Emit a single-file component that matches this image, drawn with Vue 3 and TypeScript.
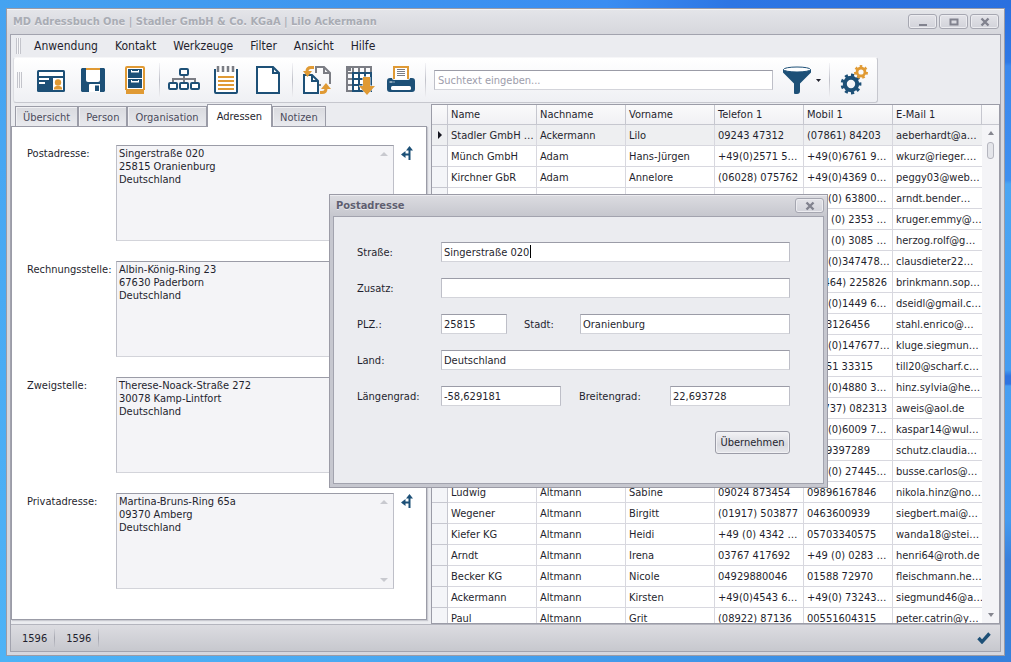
<script setup lang="ts">
import { ref } from 'vue'

interface Contact {
  name: string
  last: string
  first: string
  phone: string
  mobile: string
  mail: string
}

interface AddressBlock {
  id: string
  label: string
  text: string
  route: boolean
}

const menu: string[] = ['Anwendung', 'Kontakt', 'Werkzeuge', 'Filter', 'Ansicht', 'Hilfe']
const tabs: string[] = ['Übersicht', 'Person', 'Organisation', 'Adressen', 'Notizen']
const activeTab = ref('Adressen')
const search = ref('')

const addresses: AddressBlock[] = [
  { id: 'post', label: 'Postadresse:', text: 'Singerstraße 020\n25815 Oranienburg\nDeutschland', route: true },
  { id: 'bill', label: 'Rechnungsstelle:', text: 'Albin-König-Ring 23\n67630 Paderborn\nDeutschland', route: true },
  { id: 'branch', label: 'Zweigstelle:', text: 'Therese-Noack-Straße 272\n30078 Kamp-Lintfort\nDeutschland', route: true },
  { id: 'home', label: 'Privatadresse:', text: 'Martina-Bruns-Ring 65a\n09370 Amberg\nDeutschland', route: true },
]

const columns: string[] = ['Name', 'Nachname', 'Vorname', 'Telefon 1', 'Mobil 1', 'E-Mail 1']

const row = (name: string, last: string, first: string, phone: string, mobile: string, mail: string): Contact => ({
  name, last, first, phone, mobile, mail,
})

const contacts: Contact[] = [
  row('Stadler GmbH …', 'Ackermann', 'Lilo', '09243 47312', '(07861) 84203', 'aeberhardt@a…'),
  row('Münch GmbH', 'Adam', 'Hans-Jürgen', '+49(0)2571 5…', '+49(0)6761 9…', 'wkurz@rieger.…'),
  row('Kirchner GbR', 'Adam', 'Annelore', '(06028) 075762', '+49(0)4369 0…', 'peggy03@web…'),
  row('', '', '', '', '+49(0) 63800…', 'arndt.bender…'),
  row('', '', '', '', '+49 (0) 2353 …', 'kruger.emmy@…'),
  row('', '', '', '', '+49 (0) 3085 …', 'herzog.rolf@g…'),
  row('', '', '', '', '+49(0)347478…', 'clausdieter22…'),
  row('', '', '', '', '(07464) 225826', 'brinkmann.sop…'),
  row('', '', '', '', '+49(0)1449 6…', 'dseidl@gmail.c…'),
  row('', '', '', '', '0463126456', 'stahl.enrico@…'),
  row('', '', '', '', '+49(0)147677…', 'kluge.siegmun…'),
  row('', '', '', '', '03651 33315', 'till20@scharf.c…'),
  row('', '', '', '', '+49(0)4880 3…', 'hinz.sylvia@he…'),
  row('', '', '', '', '(07737) 082313', 'aweis@aol.de'),
  row('', '', '', '', '+49(0)6009 7…', 'kaspar14@wul…'),
  row('', '', '', '', '0469397289', 'schutz.claudia…'),
  row('', '', '', '', '+49(0) 27445…', 'busse.carlos@…'),
  row('Ludwig', 'Altmann', 'Sabine', '09024 873454', '09896167846', 'nikola.hinz@no…'),
  row('Wegener', 'Altmann', 'Birgitt', '(01917) 503877', '0463600939', 'siegbert.mai@…'),
  row('Kiefer KG', 'Altmann', 'Heidi', '+49 (0) 4342 …', '05703340575', 'wanda18@stei…'),
  row('Arndt', 'Altmann', 'Irena', '03767 417692', '+49 (0) 0283 …', 'henri64@roth.de'),
  row('Becker KG', 'Altmann', 'Nicole', '04929880046', '01588 72970', 'fleischmann.he…'),
  row('Ackermann', 'Altmann', 'Kirsten', '+49(0)4543 6…', '+49(0) 73243…', 'siegmund46@a…'),
  row('Paul', 'Altmann', 'Grit', '(08922) 87136', '00551604315', 'peter.catrin@y…'),
]

const form = ref({
  street: 'Singerstraße 020',
  extra: '',
  zip: '25815',
  city: 'Oranienburg',
  country: 'Deutschland',
  lng: '-58,629181',
  lat: '22,693728',
})
</script>

<template>
  <div class="desktop">
    <main class="window">
      <header class="titlebar">
        <h1>MD Adressbuch One | Stadler GmbH &amp; Co. KGaA | Lilo Ackermann</h1>
        <button class="cap" type="button" aria-label="Minimieren">
          <svg width="12" height="10" viewBox="0 0 12 10"><path d="M2 8h8" stroke="#81828e" stroke-width="2" /></svg>
        </button>
        <button class="cap" type="button" aria-label="Maximieren">
          <svg width="12" height="10" viewBox="0 0 12 10"><rect x="2.5" y="2.5" width="7" height="5" fill="none" stroke="#81828e" stroke-width="2" /></svg>
        </button>
        <button class="cap" type="button" aria-label="Schließen">
          <svg width="12" height="10" viewBox="0 0 12 10"><path d="M2.5 1.5l7 7M9.5 1.5l-7 7" stroke="#81828e" stroke-width="2.4" /></svg>
        </button>
      </header>

      <div class="client">
        <nav class="menu">
          <i class="grip"></i>
          <button v-for="m in menu" :key="m" type="button">{{ m }}</button>
        </nav>

        <div class="toolbar">
          <i class="grip tall"></i>
          <div class="group">
            <button class="tool" type="button" aria-label="Visitenkarte">
              <svg viewBox="0 0 32 32">
                <rect x="2" y="6" width="28" height="22" rx="1.5" fill="#1d5077" />
                <path d="M4 8h24v4H4zM4 14h10v2H4zM4 18h6v2H4zM18 14h10v12H18z" fill="#fff" />
                <circle cx="23" cy="18.5" r="3.2" fill="#e09a34" />
                <path d="M19 25.5v-1.5q0-1.500 2.500-2h3q2.500.5 2.500 2v1.500z" fill="#e09a34" />
              </svg>
            </button>
            <button class="tool" type="button" aria-label="Speichern">
              <svg viewBox="0 0 32 32">
                <path d="M5 4h22l1 1v22l-1 1H5l-1-1V5z" fill="#1d5077" />
                <path d="M9 4h14v12q0 2-2 2H11q-2 0-2-2z" fill="#fff" />
                <path d="M9 4h14v2H9z" fill="#e09a34" />
                <path d="M12 28v-7q0-1 1-1h10v8z" fill="#fff" />
                <path d="M18 21.5h4V27h-4z" fill="#1d5077" />
              </svg>
            </button>
            <button class="tool" type="button" aria-label="Archiv">
              <svg viewBox="0 0 32 32">
                <path d="M8 2h16q2 0 2 2v22h-1v4H7v-4H6V4q0-2 2-2z" fill="#e09a34" />
                <rect x="8" y="4" width="16" height="21" fill="#fff" />
                <path d="M9 5h14v9H9zM9 15h14v9H9z" fill="#1d5077" />
                <path d="M12 6h1v1h6V6h1v2.500h-8zM12 16h1v1h6v-1h1v2.500h-8z" fill="#fff" />
              </svg>
            </button>
          </div>
          <i class="sep"></i>
          <div class="group">
            <button class="tool" type="button" aria-label="Struktur">
              <svg viewBox="0 0 32 32" fill="none" stroke="#1d5077" stroke-width="2">
                <path d="M16 12v7M5 19v-4h22v4" stroke="#7b7d84" />
                <g fill="#fff">
                  <rect x="12" y="5" width="8" height="6" rx="1" />
                  <rect x="1" y="19" width="8" height="6" rx="1" />
                  <rect x="12" y="19" width="8" height="6" rx="1" />
                  <rect x="23" y="19" width="8" height="6" rx="1" />
                </g>
              </svg>
            </button>
            <button class="tool" type="button" aria-label="Notizblock">
              <svg viewBox="0 0 32 32">
                <path d="M5 5v23q0 1 1 1h20q1 0 1-1V5" fill="#fff" stroke="#1d5077" stroke-width="2" />
                <path d="M8 2v6M13 2v6M18 2v6M23 2v6" stroke="#7b7d84" stroke-width="2.5" />
                <path d="M8 13h16M8 17h16M8 21h16M8 25h16" stroke="#e09a34" stroke-width="2" />
              </svg>
            </button>
            <button class="tool" type="button" aria-label="Neu">
              <svg viewBox="0 0 32 32">
                <path d="M5 3h16l6 6v20H5z" fill="#fff" stroke="#1d5077" stroke-width="2" />
                <path d="M21 3v6h6" fill="none" stroke="#1d5077" stroke-width="2" />
              </svg>
            </button>
          </div>
          <i class="sep"></i>
          <div class="group">
            <button class="tool" type="button" aria-label="Kopieren">
              <svg viewBox="0 0 32 32" fill="none" stroke-width="2">
                <path d="M15 9V3h8l6 6v11M23 3v6h6M18 21h2" stroke="#7b7d84" />
                <path d="M3 11h8l6 6v12H3z" fill="#fff" stroke="#1d5077" />
                <path d="M11 11v6h6" stroke="#1d5077" />
                <path d="M13 3.500H10q-4 0-4 4" stroke="#e09a34" stroke-width="3" />
                <path d="M2 7h9l-4.500 6z" fill="#e09a34" />
                <path d="M19 28.500h2q4 0 4-4" stroke="#e09a34" stroke-width="3" />
                <path d="M20 25h10l-5-6z" fill="#e09a34" />
              </svg>
            </button>
            <button class="tool" type="button" aria-label="Tabelle exportieren">
              <svg viewBox="0 0 32 32" fill="none" stroke-width="2">
                <path d="M4 4v23h5M3 3h25v5M3 9h6M3 15h6M3 21h6M10 3v5M16 3v5M22 3v5" stroke="#7b7d84" />
                <path d="M3 2h5v5H3z" fill="#7b7d84" />
                <path d="M10 9h18v18H10zM10 15h18M10 21h18M16 9v18M22 9v18" fill="#fff" stroke="#1d5077" />
                <path d="M20 13h7v9h5l-8 9-8-9h4z" fill="#e09a34" stroke="#f4f4f7" stroke-width="1" paint-order="stroke" />
              </svg>
            </button>
            <button class="tool" type="button" aria-label="Drucken">
              <svg viewBox="0 0 32 32">
                <path d="M9 15V3h14v12" fill="#fff" stroke="#e09a34" stroke-width="2" />
                <path d="M12 5.500h8M12 7.500h8M12 9.500h8M12 11.500h8" stroke="#7b7d84" />
                <path d="M5 14h2q0 2 2 2h14q2 0 2-2h2q3 0 3 3v8q0 3-3 3H5q-3 0-3-3v-8q0-3 3-3z" fill="#1d5077" />
                <rect x="6" y="22" width="20" height="4" rx="1.5" fill="#fff" />
                <path d="M4.500 18h3M8.500 18h1" stroke="#fff" />
              </svg>
            </button>
          </div>
          <i class="sep"></i>
          <input v-model="search" class="search" type="text" placeholder="Suchtext eingeben..." aria-label="Suchtext" />
          <button class="tool filter" type="button" aria-label="Filter">
            <svg viewBox="0 0 32 32">
              <path d="M2 5.500v3l11 11V29q0 1 1 1h2q3 0 3-3v-7.500l11-11v-3z" fill="#1d5077" />
              <ellipse cx="16" cy="5.500" rx="13.500" ry="2.500" fill="#fff" stroke="#1d5077" />
            </svg>
          </button>
          <button class="drop" type="button" aria-label="Filterauswahl">
            <svg width="5" height="3" viewBox="0 0 5 3"><path d="M0 0h5L2.500 3z" fill="#23232f" /></svg>
          </button>
          <i class="sep"></i>
          <button class="tool" type="button" aria-label="Einstellungen">
            <svg viewBox="0 0 32 32" fill="none">
              <g stroke="#1d5077">
                <circle cx="13" cy="20" r="6.2" stroke-width="4" />
                <circle cx="13" cy="20" r="8.8" stroke-width="3.2" pathLength="18" stroke-dasharray="1 1" stroke-dashoffset="0.5" />
              </g>
              <g stroke="#e09a34">
                <circle cx="23" cy="8" r="4" stroke-width="2.8" />
                <circle cx="23" cy="8" r="5.8" stroke-width="2.4" pathLength="14" stroke-dasharray="1 1" />
              </g>
            </svg>
          </button>
        </div>

        <div class="work">
          <section class="detail">
            <div class="tabs" role="tablist">
              <button
                v-for="t in tabs"
                :key="t"
                type="button"
                role="tab"
                :aria-selected="t === activeTab"
                :class="{ active: t === activeTab }"
                @click="activeTab = t"
              >{{ t }}</button>
            </div>
            <div class="page">
              <div v-for="a in addresses" :key="a.id" class="address">
                <label :for="a.id">{{ a.label }}</label>
                <div class="memo">
                  <textarea :id="a.id" readonly :value="a.text"></textarea>
                  <i class="tri up"></i>
                  <i class="tri down"></i>
                </div>
                <button v-if="a.route" class="route" type="button" aria-label="Route">
                  <svg width="13" height="14" viewBox="0 0 13 14">
                    <path d="M8.500 14V3M9 8.500H3" fill="none" stroke="#1d5077" stroke-width="2" />
                    <path d="M8.500 0L12 4.500H5zM0 8.500L4.500 5v7z" fill="#1d5077" />
                  </svg>
                </button>
              </div>
            </div>
          </section>

          <section class="grid">
            <div class="rows">
              <table>
                <colgroup>
                  <col class="mark" />
                  <col v-for="c in columns" :key="c" />
                </colgroup>
                <thead>
                  <tr>
                    <th></th>
                    <th v-for="c in columns" :key="c" scope="col">{{ c }}</th>
                  </tr>
                </thead>
                <tbody>
                  <tr v-for="(c, i) in contacts" :key="i" :class="{ current: i === 0 }">
                    <td class="mark"><i v-if="i === 0" class="pointer"></i></td>
                    <td>{{ c.name }}</td>
                    <td>{{ c.last }}</td>
                    <td>{{ c.first }}</td>
                    <td>{{ c.phone }}</td>
                    <td>{{ c.mobile }}</td>
                    <td>{{ c.mail }}</td>
                  </tr>
                </tbody>
              </table>
            </div>
            <div class="scroll">
              <div class="corner"></div>
              <i class="arrow up"></i>
              <i class="thumb"></i>
              <i class="arrow down"></i>
            </div>
          </section>
        </div>

        <footer class="status">
          <span>1596</span><i></i><span>1596</span><i></i>
          <svg width="14" height="12" viewBox="0 0 14 12"><path d="M1.500 6l3.500 3.800L12.500 1.500" fill="none" stroke="#1d5077" stroke-width="3.4" /></svg>
        </footer>
      </div>
    </main>

    <div class="dialog" role="dialog" aria-labelledby="dlg-title">
      <header>
        <h2 id="dlg-title">Postadresse</h2>
        <button class="cap" type="button" aria-label="Dialog schließen">
          <svg width="12" height="10" viewBox="0 0 12 10"><path d="M2.500 1.500l7 7M9.500 1.500l-7 7" stroke="#81828e" stroke-width="2.4" /></svg>
        </button>
      </header>
      <form @submit.prevent>
        <div class="line">
          <label for="street">Straße:</label>
          <div class="focused"><input id="street" v-model="form.street" type="text" /><i class="caret"></i></div>
        </div>
        <div class="line">
          <label for="extra">Zusatz:</label>
          <input id="extra" v-model="form.extra" type="text" />
        </div>
        <div class="line zip">
          <label for="zip">PLZ.:</label>
          <input id="zip" v-model="form.zip" type="text" />
          <label for="city">Stadt:</label>
          <input id="city" v-model="form.city" type="text" />
        </div>
        <div class="line">
          <label for="country">Land:</label>
          <input id="country" v-model="form.country" type="text" />
        </div>
        <div class="line geo">
          <label for="lng">Längengrad:</label>
          <input id="lng" v-model="form.lng" type="text" />
          <label for="lat">Breitengrad:</label>
          <input id="lat" v-model="form.lat" type="text" />
        </div>
        <button class="apply" type="submit">Übernehmen</button>
      </form>
    </div>
  </div>
</template>

<style>
body {
  margin: 0;
}
</style>

<style scoped>
.desktop,
.desktop * {
  box-sizing: border-box;
}

.desktop {
  position: relative;
  display: flex;
  height: 100vh;
  padding: 8px 6px 6px;
  background:
    linear-gradient(to right, #45a3f1 0, #3e95ef 35%, #3a8df2 60%, #2d76e4 72%, #2a70df 100%) top / 100% 8px no-repeat,
    linear-gradient(to bottom, #2b70e0 0, #2f79e6 62px, #3c89ee 66px, #3f8fef 180px, #4ca6f3 184px, #469df1 370px, #2f74e0 376px, #2f74e0 384px, #489ff2 386px, #459bf0 520px, #3a80dc 560px, #3681dc 100%) right / 8px 100% no-repeat,
    linear-gradient(to bottom, #45a3f1, #4eb3f6) left / 8px 100% no-repeat,
    linear-gradient(to right, #4eb3f6 0, #4aa9f2 35%, #3f95e8 70%, #3580dc 100%);
  color: #1f1f2e;
  font: 11px/13px "DejaVu Sans Condensed", "DejaVu Sans", sans-serif;
  overflow: hidden;
}

button,
input,
textarea {
  margin: 0;
  color: inherit;
  font: inherit;
}

button {
  display: flex;
  align-items: center;
  justify-content: center;
  padding: 0;
  border: 0;
  background: none;
}

svg {
  display: block;
}

.window {
  display: flex;
  flex: 1;
  flex-direction: column;
  min-width: 0;
  padding: 0 3px 3px;
  border: 1px solid #9a9ba6;
  background: #d6d7de;
}

.titlebar {
  display: flex;
  align-items: center;
  gap: 2px;
  height: 25px;
  margin: 0 -3px;
  padding: 0 5px 0 6px;
  background: linear-gradient(#e4e5e9, #d6d7dd);
  box-shadow: inset 0 1px #f4f4f6;
}

h1,
h2 {
  flex: 1;
  margin: 0;
  font-size: 11px;
  line-height: 14px;
}

h1 {
  color: #a9acb4;
  text-shadow: 0 1px #f0f0f3;
  white-space: nowrap;
}

.cap {
  width: 29px;
  height: 15px;
  border: 1px solid #a6a7b1;
  border-radius: 3px;
  background: linear-gradient(#e3e3e8, #d2d3da);
  box-shadow: inset 0 0 0 1px #ececf0;
}

.client {
  display: flex;
  flex: 1;
  flex-direction: column;
  min-height: 0;
  border: 1px solid #a2a3ae;
  background: #ebecf0;
}

.menu {
  display: flex;
  align-items: center;
  height: 22px;
  padding-left: 5px;
  font-size: 12px;
  line-height: 16px;
}

.menu button {
  margin-left: 17px;
}

.menu .grip + button {
  margin-left: 13px;
}

.grip {
  width: 5px;
  height: 16px;
  background: repeating-linear-gradient(to right, #c3c4cb 0 1px, #f7f7f9 1px 2px);
}

.grip.tall {
  margin: 0 13px 0 3px;
}

.toolbar {
  display: flex;
  flex: none;
  align-items: center;
  align-self: flex-start;
  height: 46px;
  margin-left: 2px;
  padding-right: 7px;
  border: 1px solid #c6c7ce;
  border-top-color: #f6f6f8;
  border-left-color: #dcdde2;
  border-radius: 3px;
  background: linear-gradient(#fff, #eff0f4);
}

.group {
  display: flex;
  gap: 10px;
}

.sep {
  width: 1px;
  height: 34px;
  margin: 0 8px;
  background: linear-gradient(#f4f4f7, #c0c1c9 50%, #f0f0f3);
}

.tool,
.tool svg {
  width: 32px;
  height: 32px;
}

.search {
  width: 339px;
  height: 20px;
  padding: 0 3px;
}

.search,
.line input {
  border: 1px solid;
  border-color: #9b9ca7 #bebfc8 #d3d4da #bebfc8;
  border-radius: 0;
  outline: none;
  background: #fff;
}

.search::placeholder {
  color: #9d9dab;
  opacity: 1;
}

.filter {
  margin-left: 8px;
}

.drop {
  width: 5px;
  height: 32px;
  margin-left: 3px;
}

.work {
  display: flex;
  flex: 1;
  gap: 4px;
  min-height: 0;
  padding-top: 1px;
}

.detail {
  display: flex;
  flex: none;
  flex-direction: column;
  width: 416px;
  padding-bottom: 4px;
}

.tabs {
  display: flex;
  align-items: flex-end;
  height: 22px;
  padding-left: 4px;
}

.tabs button {
  height: 20px;
  padding: 2px 7px 0;
  border: 1px solid #9b9ca7;
  border-bottom: 0;
  background: linear-gradient(#d9dadf, #e9eaee);
  box-shadow: inset 1px 1px #f1f1f4;
  color: #4b4b5c;
}

.tabs .active {
  z-index: 1;
  height: 23px;
  margin-bottom: -1px;
  padding: 0 9px;
  background: #fff;
  box-shadow: none;
  color: #1f1f2e;
}

.page {
  display: flex;
  flex: 1;
  flex-direction: column;
  gap: 20px;
  padding: 18px 12px 0 15px;
  border: 1px solid #9b9ca7;
  background: #fff;
  box-shadow: 1px 1px 1px #c9cad1;
  overflow: hidden;
}

.address {
  display: flex;
  align-items: flex-start;
}

.address label {
  width: 89px;
  padding-top: 2px;
  white-space: nowrap;
}

.memo {
  position: relative;
  flex: 1;
  height: 96px;
}

.memo textarea {
  display: block;
  width: 100%;
  height: 100%;
  padding: 1px 2px;
  border: 1px solid;
  border-color: #9b9ca7 #bebfc8 #d3d4da #bebfc8;
  outline: none;
  background: #f4f4f7;
  resize: none;
  overflow: hidden;
}

.tri {
  position: absolute;
  right: 6px;
  border: solid transparent;
  border-width: 0 4px;
}

.tri.up {
  top: 7px;
  border-bottom: 4px solid #c8c9cf;
}

.tri.down {
  bottom: 7px;
  border-top: 4px solid #c8c9cf;
}

.route {
  margin: 1px 0 0 7px;
}

.grid {
  display: flex;
  flex: 1;
  min-width: 0;
  border: 1px solid #9b9ca7;
  background: #fff;
  overflow: hidden;
}

.rows {
  flex: 1;
  min-width: 0;
  overflow: hidden;
}

table {
  width: 100%;
  border-spacing: 0;
  table-layout: fixed;
}

col.mark {
  width: 16px;
}

th,
td {
  height: 21px;
  padding: 0 0 0 3px;
  border-right: 1px solid #d8d8df;
  border-bottom: 1px solid #d8d8df;
  font-weight: normal;
  text-align: left;
  white-space: nowrap;
  overflow: hidden;
}

th {
  height: 20px;
  border-color: #c6c7cf;
  background: linear-gradient(#fafafb, #f1f1f4);
}

td.mark {
  padding-left: 6px;
  border-color: #c6c7cf;
  background: #f4f5f8;
}

td:last-child {
  border-right: 0;
}

.current td {
  background: #eeeff1;
}

.pointer {
  display: block;
  width: 0;
  border: solid transparent;
  border-width: 4px 0 4px 4px;
  border-left-color: #14141e;
}

.scroll {
  display: flex;
  flex-direction: column;
  align-items: center;
  width: 17px;
  background: #f4f4f7;
}

.corner {
  width: 100%;
  height: 20px;
  margin-bottom: 6px;
  border-bottom: 1px solid #c6c7cf;
  background: linear-gradient(#fafafb, #f1f1f4);
}

.arrow {
  border: solid transparent;
  border-width: 0 3px;
}

.arrow.up {
  border-bottom: 4px solid #85868f;
}

.arrow.down {
  margin: auto 0 6px;
  border-top: 4px solid #85868f;
}

.thumb {
  width: 7px;
  height: 17px;
  margin-top: 7px;
  border: 1px solid #b5b6bf;
  border-radius: 3px;
  background: #e4e5ea;
}

.status {
  display: flex;
  flex: none;
  align-items: center;
  height: 27px;
  padding: 0 9px 0 11px;
  border-top: 1px solid #b4b5be;
  background: linear-gradient(#dcdce1, #c7c8ce);
}

.status i {
  width: 1px;
  height: 18px;
  margin: 0 11px 0 7px;
  background: linear-gradient(#cfd0d6, #a5a6af 50%, #c4c5cc);
}

.status svg {
  margin-left: auto;
}

.dialog {
  position: absolute;
  top: 194px;
  left: 329px;
  width: 499px;
  padding: 0 3px 3px;
  border: 1px solid #9b9ba6;
  background: #c6c7cf;
}

.dialog header {
  display: flex;
  align-items: center;
  height: 21px;
  margin: 0 -3px;
  padding: 0 3px 0 6px;
  background: linear-gradient(#dcdce1, #c6c7ce);
  box-shadow: inset 0 1px #ececf0;
}

.dialog h2 {
  color: #5f5f70;
  text-shadow: 0 1px #e8e8ec;
}

.dialog form {
  display: flex;
  flex-direction: column;
  gap: 16px;
  padding: 25px 33px 29px 23px;
  border: 1px solid #a2a3ae;
  background: #ebecf0;
}

.line {
  display: grid;
  grid-template-columns: 84px 1fr;
  align-items: center;
}

.line.zip {
  grid-template-columns: 84px 66px 73px 1fr;
}

.line.geo {
  grid-template-columns: 84px 120px 109px 1fr;
}

.zip label + input + label {
  padding-left: 17px;
}

.geo label + input + label {
  padding-left: 18px;
}

.line input {
  display: block;
  width: 100%;
  height: 20px;
  min-width: 0;
  padding: 0 2px;
}

.focused {
  position: relative;
}

.caret {
  position: absolute;
  top: 3px;
  left: 89px;
  width: 1px;
  height: 13px;
  background: #000;
}

.apply {
  align-self: flex-end;
  width: 75px;
  height: 23px;
  margin-top: 9px;
  border: 1px solid #9b9ca7;
  border-radius: 3px;
  background: linear-gradient(#f2f2f5, #d9dae0 60%, #e6e7eb);
  box-shadow: inset 0 0 0 1px #f1f1f4;
}
</style>
